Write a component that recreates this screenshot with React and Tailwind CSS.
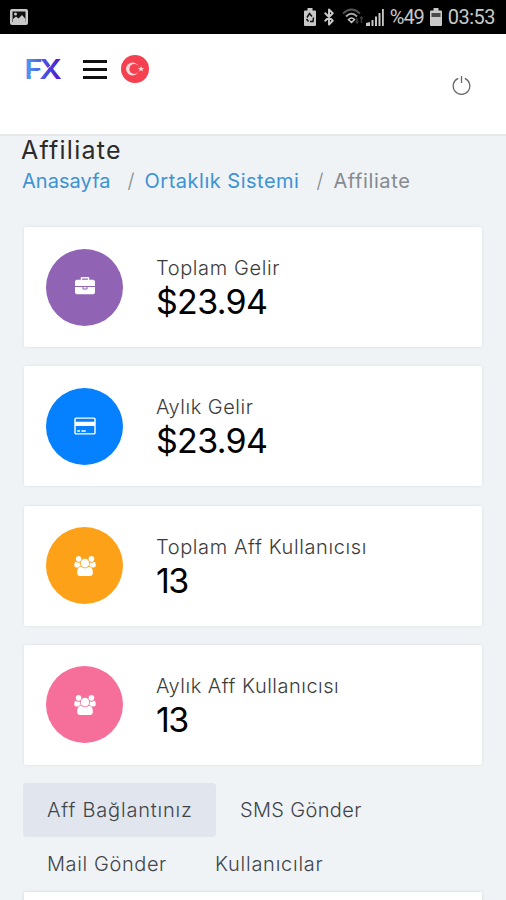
import { Bluetooth } from "lucide-react";

const cards = [
  { label: "Toplam Gelir", value: "$23.94", icon: "briefcase", color: "bg-[#9163b4]", track: "tracking-[0.6px]", valueTrack: "tracking-[-0.7px]" },
  { label: "Aylık Gelir", value: "$23.94", icon: "card", color: "bg-[#0580fe]", track: "tracking-[0.5px]", valueTrack: "tracking-[-0.7px]" },
  { label: "Toplam Aff Kullanıcısı", value: "13", icon: "users", color: "bg-[#fda118]", track: "tracking-[0.6px]", valueTrack: "tracking-[-1.5px]" },
  { label: "Aylık Aff Kullanıcısı", value: "13", icon: "users", color: "bg-[#f66f9b]", track: "tracking-[0.5px]", valueTrack: "tracking-[-1.5px]" },
];

const icons = {
  briefcase: {
    box: "0 0 1792 1792",
    d: "M640 256h512v-128h-512v128zm1152 640v480q0 66-47 113t-113 47h-1472q-66 0-113-47t-47-113v-480h672v160q0 26 19 45t45 19h320q26 0 45-19t19-45v-160h672zm-768 0v128h-256v-128h256zm768-480v384h-1792v-384q0-66 47-113t113-47h352v-160q0-40 28-68t68-28h576q40 0 68 28t28 68v160h352q66 0 113 47t47 113z",
  },
  card: {
    box: "0 0 1920 1792",
    d: "M1760 128q66 0 113 47t47 113v1216q0 66-47 113t-113 47h-1600q-66 0-113-47t-47-113v-1216q0-66 47-113t113-47h1600zm-1600 128q-13 0-22.500 9.500t-9.500 22.500v224h1664v-224q0-13-9.500-22.500t-22.500-9.500h-1600zm1600 1280q13 0 22.500-9.500t9.500-22.500v-608h-1664v608q0 13 9.500 22.500t22.500 9.500h1600zm-1504-128v-128h256v128h-256zm384 0v-128h384v128h-384z",
  },
  users: {
    box: "0 0 1920 1792",
    d: "M593 896q-162 5-265 128h-134q-82 0-138-40.500t-56-118.500q0-353 124-353 6 0 43.500 21t97.500 42.500 119 21.500q67 0 133-23-5 37-5 66 0 139 81 256zm1071 637q0 120-73 189.500t-194 69.500h-874q-121 0-194-69.500t-73-189.500q0-53 3.500-103.500t14-109 26.500-108.500 43-97.500 62-81 85.500-53.500 111.500-20q10 0 43 21.500t73 48 107 48 135 21.500 135-21.500 107-48 73-48 43-21.500q61 0 111.500 20t85.500 53.500 62 81 43 97.500 26.500 108.500 14 109 3.500 103.500zm-1024-1277q0 106-75 181t-181 75-181-75-75-181 75-181 181-75 181 75 75 181zm704 384q0 159-112.500 271.500t-271.500 112.500-271.500-112.500-112.500-271.500 112.500-271.500 271.500-112.500 271.500 112.500 112.500 271.500zm576 225q0 78-56 118.500t-138 40.500h-134q-103-123-265-128 81-117 81-256 0-29-5-66 66 23 133 23 59 0 119-21.500t97.500-42.500 43.500-21q124 0 124 353zm-128-609q0 106-75 181t-181 75-181-75-75-181 75-181 181-75 181 75 75 181z",
  },
};

function StatusBar() {
  return (
    <div className="flex h-[34px] items-center bg-black pl-[10px] pr-[11px] text-[#c9c9c9]">
      <svg width="18" height="16" viewBox="0 0 18 16">
        <rect width="18" height="16" rx="2" fill="#c9c9c9" />
        <rect x="2.500" y="2.500" width="13" height="10.500" fill="#111" />
        <path d="M3 13V10l3-2.500 2.500 2 3.500-3.500 3.500 4v3z" fill="#c9c9c9" />
        <circle cx="5.500" cy="5" r="1.500" fill="#c9c9c9" />
      </svg>
      <div className="ml-auto flex items-center">
        <svg width="12" height="18" viewBox="0 0 12 18">
          <path d="M3.500 0h5v2.500H11a1 1 0 0 1 1 1V17a1 1 0 0 1-1 1H1a1 1 0 0 1-1-1V3.500a1 1 0 0 1 1-1h2.500z" fill="#c9c9c9" />
          <path d="M3 9.500 5.500 5.500 8 8.500M9.500 9.500 9 13.500H6M4.500 13.500 2.500 11" fill="none" stroke="#111" strokeWidth="1.500" />
        </svg>
        <Bluetooth className="ml-[4px]" width={18} height={20} strokeWidth={2.6} />
        <svg className="ml-[4px]" width="23" height="18" viewBox="0 0 23 18" fill="none">
          <path d="M1 5.500Q9.500-2.500 18 5.500" stroke="#555" strokeWidth="1.800" />
          <path d="M4 8.500Q9.500 3 15 8.500" stroke="#aaa" strokeWidth="1.800" />
          <path d="M6.500 11.500Q9.500 8.500 12.500 11.500L9.500 14.500z" stroke="#c9c9c9" strokeWidth="1.500" />
          <path d="M15 15v-5m-1.500 3.500L15 15l1.500-1.500M19.500 9v6M18 10.500 19.500 9l1.500 1.500" stroke="#383838" strokeWidth="1.500" />
        </svg>
        <svg width="19" height="18" viewBox="0 0 19 18" fill="#c9c9c9">
          <path d="M1 18v-3l4-1v4zM6.500 12h2v6h-2zM10 8.500h2V18h-2zM13.500 5h2v13h-2zM17 1h1.800v17H17z" />
        </svg>
        <span className="ml-[6px] font-[Roboto] text-[20px] leading-none tracking-[-1.1px]">%49</span>
        <svg className="ml-[6px]" width="12" height="18" viewBox="0 0 12 18">
          <path d="M3.500 0h5v2.500H11a1 1 0 0 1 1 1V17a1 1 0 0 1-1 1H1a1 1 0 0 1-1-1V3.500a1 1 0 0 1 1-1h2.500z" fill="#c9c9c9" />
          <path d="M1.500 5h9v4h-9z" fill="#4a4a4a" />
        </svg>
        <span className="ml-[6px] font-[Roboto] text-[20px] leading-none tracking-[-0.5px]">03:53</span>
      </div>
    </div>
  );
}

function Logo() {
  return (
    <svg className="overflow-visible" width="34" height="36" viewBox="0 0 34 36">
      <defs>
        <linearGradient id="fx" x1="0" x2="30" y1="0" y2="0" gradientUnits="userSpaceOnUse">
          <stop offset="0" stopColor="#4d9bf0" />
          <stop offset="0.5" stopColor="#4d55e2" />
          <stop offset="1" stopColor="#4c16d0" />
        </linearGradient>
      </defs>
      {/* stretched and pulled together so the X leans into the F */}
      <text
        transform="scale(1.14 1)"
        x="-1.5"
        y="28.500"
        letterSpacing="-3"
        fill="url(#fx)"
        fontFamily="Inter, sans-serif"
        fontWeight="600"
        fontSize="27.500"
      >
        FX
      </text>
      <path d="M4 24 14 19.500M18.500 20 25 14.500" stroke="#fff" strokeWidth="0.900" />
    </svg>
  );
}

function Header() {
  return (
    <header className="flex h-[102px] items-start border-b-2 border-[#e6e8e9] bg-white pl-[26px] pr-[35px]">
      <div className="flex items-center pt-[17px]">
        <Logo />
        <div className="ml-[23px] flex w-6 flex-col gap-[5px]">
          <span className="h-[3px] bg-[#111]" />
          <span className="h-[3px] bg-[#111]" />
          <span className="h-[3px] bg-[#111]" />
        </div>
        <svg className="ml-[14px]" width="28" height="28" viewBox="0 0 28 28">
          <circle cx="14" cy="14" r="14" fill="#f5414f" />
          <circle cx="11.500" cy="14" r="6.500" fill="#ffd9d9" />
          <circle cx="13.300" cy="14" r="5" fill="#f5414f" />
          <path d="m20 11 .8 2 2.200.1-1.700 1.300.6 2.100-1.900-1.200-1.900 1.200.6-2.100-1.700-1.300 2.200-.1z" fill="#ffd9d9" />
        </svg>
      </div>
      <svg className="ml-auto mt-[41px]" width="19" height="21" viewBox="0 0 19 21" fill="none" stroke="#666" strokeWidth="1.300">
        <path d="M6.200 3.400a8.300 8.300 0 1 0 6.600 0M9.500 1v7" />
      </svg>
    </header>
  );
}

function StatCard({ label, value, icon, color, track, valueTrack }) {
  return (
    <div className="flex h-[120px] items-center rounded-[2px] bg-white pl-[22px] shadow-[0_0_3px_#d9dee2]">
      <div className={`flex size-[77px] items-center justify-center rounded-full ${color}`}>
        <svg width="22" height="20" viewBox={icons[icon].box} fill="#fff">
          <path d={icons[icon].d} />
        </svg>
      </div>
      <div className="ml-[33px]">
        <div className={`text-[20px] font-light leading-[30px] text-[#3c3c3c] ${track}`}>{label}</div>
        <div className={`text-[34px] leading-[38px] text-black ${valueTrack}`}>{value}</div>
      </div>
    </div>
  );
}

export default function App() {
  return (
    <div className="h-[900px] overflow-hidden bg-[#eff3f6] font-[Inter,sans-serif]">
      <StatusBar />
      <Header />
      <main className="px-6">
        <h1 className="-ml-[3px] text-[25px] leading-[28px] tracking-[1.25px] text-[#2b2b2b]">Affiliate</h1>
        <nav className="-ml-[2px] mt-px flex h-8 items-center text-[20px] text-[#858a8e]">
          <a className="tracking-[0.05px] text-[#3d92d4]">Anasayfa</a>
          <span className="ml-[17px] mr-[10px] font-light">/</span>
          <a className="tracking-[0.5px] text-[#3d92d4]">Ortaklık Sistemi</a>
          <span className="ml-[17px] mr-[10px] font-light">/</span>
          <span className="tracking-[0.6px]">Affiliate</span>
        </nav>
        <div className="mt-[30px] flex w-[458px] flex-col gap-[19.3px]">
          {cards.map((c) => (
            <StatCard key={c.label} {...c} />
          ))}
        </div>
        <div className="-ml-px mt-[18px] text-[20px] font-light text-[#3f444a]">
          <div className="flex h-[54px] items-center">
            <div className="flex h-full w-[193px] items-center rounded-[4px] bg-[#e1e6ee] pl-6 tracking-[0.8px]">Aff Bağlantınız</div>
            <div className="pl-6 tracking-[0.35px]">SMS Gönder</div>
          </div>
          <div className="flex h-[54px] items-center pl-6">
            <div className="w-[168px] tracking-[0.6px]">Mail Gönder</div>
            <div className="tracking-[0.75px]">Kullanıcılar</div>
          </div>
        </div>
        <div className="mt-px h-5 w-[458px] bg-white shadow-[0_0_3px_#d0d6da]" />
      </main>
    </div>
  );
}
